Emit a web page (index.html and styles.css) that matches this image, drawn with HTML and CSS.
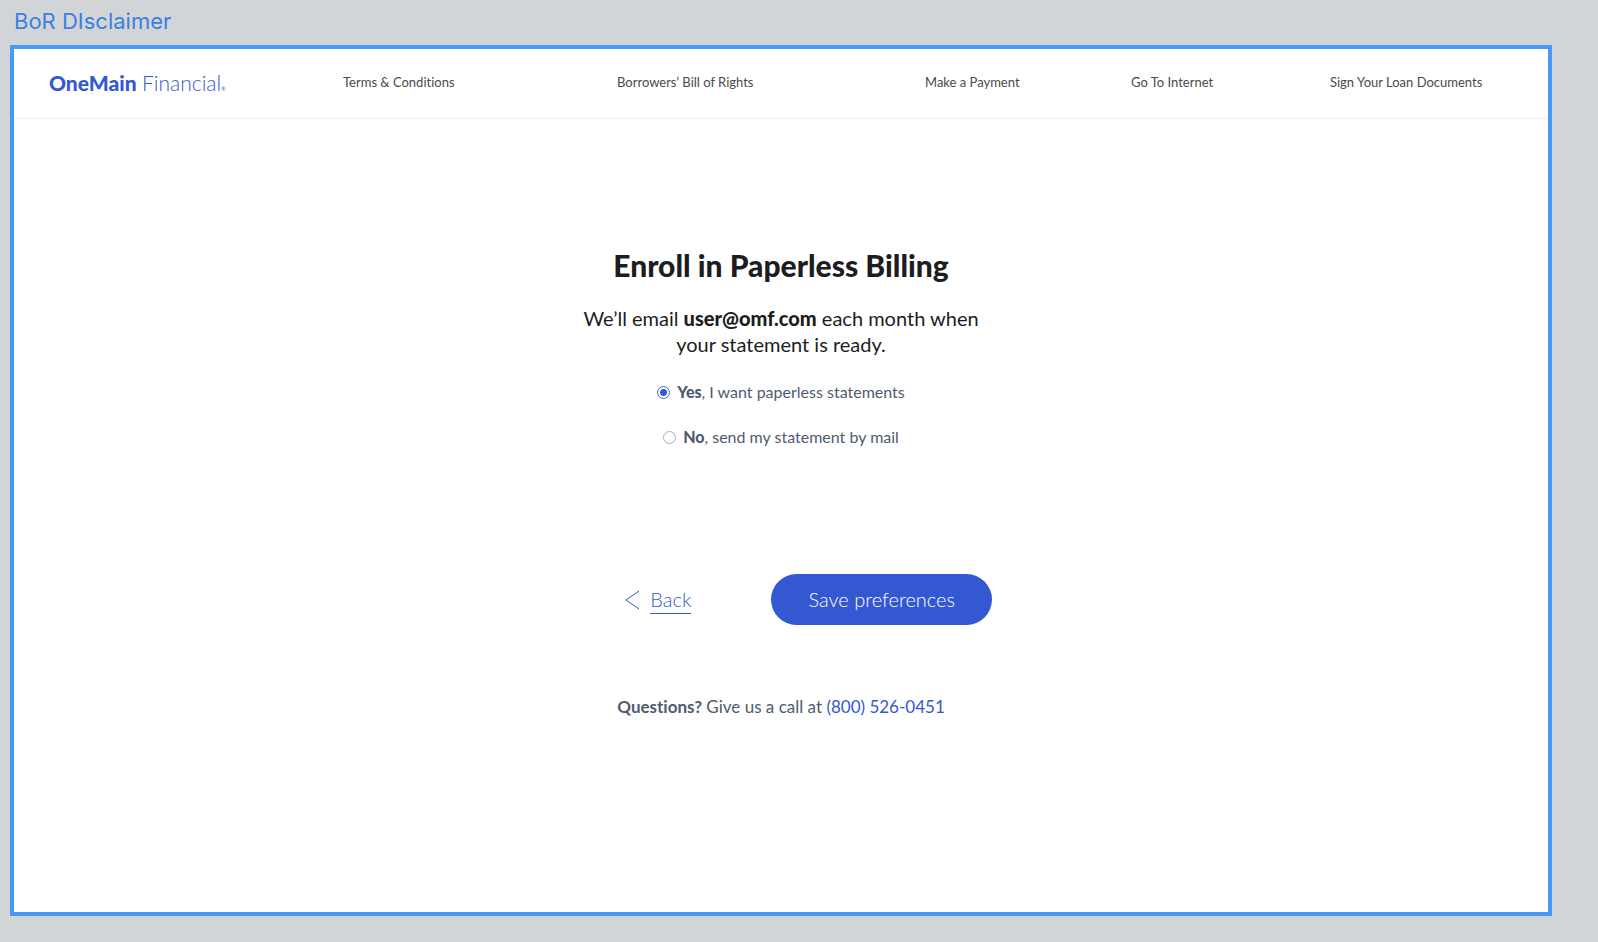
FILE: index.html
```html
<!DOCTYPE html>
<html lang="en">
<head>
<meta charset="utf-8">
<title>OneMain Financial – Paperless Billing</title>
<link rel="stylesheet" href="styles.css">
</head>
<body>
<p class="frame-label">BoR DIsclaimer</p>
<div class="frame">
  <header class="header">
    <div class="logo"><b>OneMain</b> <span class="logo-light">Financial</span><span class="logo-mark">®</span></div>
    <nav class="nav">
      <a href="#">Terms &amp; Conditions</a>
      <a href="#">Borrowers’ Bill of Rights</a>
      <a href="#">Make a Payment</a>
      <a href="#">Go To Internet</a>
      <a href="#">Sign Your Loan Documents</a>
    </nav>
  </header>
  <main class="main">
    <h1 class="title">Enroll in Paperless Billing</h1>
    <p class="intro">We’ll email <b>user@omf.com</b> each month when<br>your statement is ready.</p>
    <form class="form">
      <div class="option">
        <input type="radio" id="yes" name="billing" class="radio" checked>
        <label for="yes"><b>Yes</b>, I want paperless statements</label>
      </div>
      <div class="option">
        <input type="radio" id="no" name="billing" class="radio">
        <label for="no"><b>No</b>, send my statement by mail</label>
      </div>
      <div class="actions">
        <a class="back" href="#">
          <svg class="chevron" viewBox="0 0 15 20" aria-hidden="true"><path d="M14 1 1 10l13 9"/></svg>
          <span class="back-text">Back</span>
        </a>
        <button class="save" type="submit">Save preferences</button>
      </div>
    </form>
    <p class="help"><b>Questions?</b> Give us a call at <a href="tel:8005260451">(800) 526-0451</a></p>
  </main>
</div>
</body>
</html>
```
FILE: styles.css
```css
* { box-sizing: border-box; }

body {
  margin: 0;
  min-height: 100vh;
  display: flex;
  flex-direction: column;
  background: #d1d5d8;
  font-family: Lato, "Liberation Sans", sans-serif;
  font-variant-ligatures: none;
}

p, h1 { margin: 0; }
a { color: inherit; text-decoration: none; }

.frame-label {
  padding: 7px 14px 10px;
  font: 22px/28px Inter, sans-serif;
  color: #3c80e0;
}

.frame {
  flex: 1;
  margin: 0 46px 26px 10px;
  border: 4px solid #4799f8;
  background: #fff;
}

.header {
  display: grid;
  grid-template-columns: 294fr 1205fr;
  padding-left: 35px;
  min-height: 70px;
  align-items: center;
  border-bottom: 1px solid #efefea;
}

.logo {
  padding-top: 4px;
  font-size: 21px;
  line-height: 28px;
  color: #3358d2;
  white-space: nowrap;
}
.logo b { font-weight: 900; }
.logo-light { font-weight: 300; }
.logo-mark { font-size: 5px; }

.nav {
  display: grid;
  grid-template-columns: 274fr 308fr 206fr 199fr 218fr;
  padding-bottom: 4px;
  font-size: 13px;
  line-height: 20px;
  color: #4a4a4a;
  white-space: nowrap;
}

.main {
  display: flex;
  flex-direction: column;
  align-items: center;
  padding: 126px 20px 40px;
  text-align: center;
}

.title {
  font-size: 30px;
  line-height: 40px;
  font-weight: 900;
  color: #1d1d1f;
}

.intro {
  margin-top: 20px;
  font-size: 20px;
  line-height: 26px;
  color: #1d1d1f;
}
.intro b { font-weight: 900; }

.form {
  width: 100%;
  max-width: 422px;
}

.option {
  display: flex;
  justify-content: center;
  align-items: center;
  gap: 7px;
  margin-top: 21px;
  font-size: 16px;
  line-height: 24px;
  color: #4f5b70;
}
.option:first-child { margin-top: 23px; }
.option b { font-weight: 900; }

.radio {
  appearance: none;
  width: 13px;
  height: 13px;
  margin: 0;
  border: 1px solid #a3aec4;
  border-radius: 50%;
  background: #fff;
}
.radio:checked {
  border-color: #4468dc;
  background: radial-gradient(circle, #3358d2 3px, #fff 4px);
}

.actions {
  display: flex;
  justify-content: flex-end;
  align-items: center;
  gap: 80px;
  margin-top: 125px;
  font-size: 20px;
  font-weight: 300;
  line-height: 27px;
}

.back {
  display: flex;
  align-items: center;
  gap: 10px;
  color: #3358d2;
}
.chevron {
  width: 15px;
  height: 20px;
  fill: none;
  stroke: #3358d2;
}
.back-text { border-bottom: 1px solid #3358d2; }

.save {
  padding: 12px 37px;
  border: 0;
  border-radius: 26px;
  background: #3358d2;
  color: #fff;
  font: inherit;
}

.help {
  margin-top: 70px;
  font-size: 17px;
  line-height: 24px;
  color: #4f5b70;
}
.help a { color: #3358d2; }
```
